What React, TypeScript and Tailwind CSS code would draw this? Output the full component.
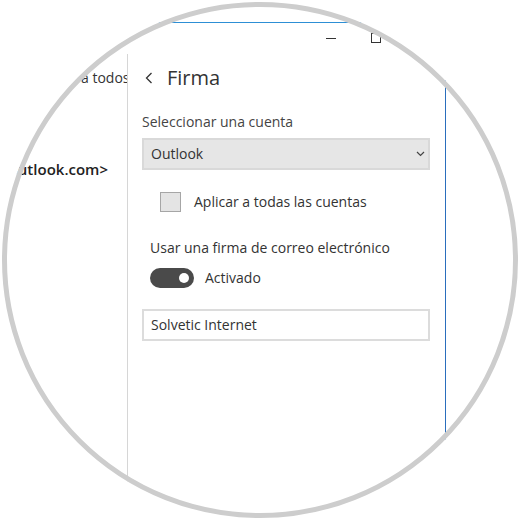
import React from "react";

function Chevron({ className }: { className?: string }) {
  return (
    <svg className={className} width="8" height="12" viewBox="0 0 8 12" fill="none">
      <polyline points="6.5,1 1.5,6 6.5,11" stroke="#333" strokeWidth="1.3" />
    </svg>
  );
}

function ChevronDown() {
  return (
    <svg width="9" height="6" viewBox="0 0 9 6" fill="none">
      <polyline points="1,1 4.5,4.5 8,1" stroke="#444" strokeWidth="1.2" />
    </svg>
  );
}

export default function App() {
  return (
    <div className="relative w-[520px] h-[520px] overflow-hidden bg-white font-['Open_Sans','Noto_Sans',sans-serif] text-[#333]">
      {/* window chrome */}
      <div className="h-[22px]" />
      <div className="h-px bg-[#2d8fd5]" />
      <div className="h-[31px] flex items-start pl-[326px] pt-[10px]">
        <div className="w-[10px] h-px bg-[#333] mt-[5px]" />
        <div className="w-[10px] h-[10px] border border-[#333] ml-[35px]" />
      </div>

      <div className="flex h-[466px]">
        {/* left pane, mostly hidden behind the lens */}
        <div className="w-[128px] border-r border-[#d6d6d6] overflow-hidden text-[14px] leading-[20px]">
          <div className="pt-[14px] pl-[81px] whitespace-nowrap">a todos</div>
          <div className="mt-[71px] flex justify-end pr-[19px] whitespace-nowrap font-semibold text-[15px] text-[#222]">
            @outlook.com&gt;
          </div>
        </div>

        {/* settings pane */}
        <div className="w-[318px] border-r border-[#2a6ebd] pl-[14px] pt-[10px]">
          <div className="flex items-center h-[28px]">
            <Chevron className="ml-[3px]" />
            <span className="ml-[14px] text-[20px] leading-[28px] text-[#333]">Firma</span>
          </div>

          <div className="mt-[20px] text-[14px] leading-[20px] text-[#444]">Seleccionar una cuenta</div>
          <div className="mt-[6px] w-[288px] h-[32px] bg-[#e6e6e6] border-2 border-[#d9d9d9] flex items-center justify-between pl-[7px] pr-[3px]">
            <span className="text-[14px] leading-[20px] text-[#333]">Outlook</span>
            <ChevronDown />
          </div>

          <div className="mt-[22px] ml-[18px] flex items-center h-[20px]">
            <div className="w-[21px] h-[20px] bg-[#e4e4e4] border border-[#a6a6a6]" />
            <span className="ml-[13px] text-[14px] leading-[20px] text-[#333]">Aplicar a todas las cuentas</span>
          </div>

          <div className="mt-[26px] ml-[8px] text-[14px] leading-[20px] text-[#333]">
            Usar una firma de correo electrónico
          </div>
          <div className="mt-[10px] ml-[8px] flex items-center h-[20px]">
            <div className="w-[44px] h-[20px] rounded-full bg-[#4a4a4a] flex items-center justify-end pr-[5px]">
              <div className="w-[10px] h-[10px] rounded-full bg-white" />
            </div>
            <span className="ml-[11px] text-[14px] leading-[20px] text-[#333]">Activado</span>
          </div>

          <div className="mt-[21px] w-[288px] h-[32px] border-2 border-[#dcdcdc] bg-white flex items-center pl-[7px]">
            <span className="text-[14px] leading-[20px] text-[#333]">Solvetic Internet</span>
          </div>
        </div>
        <div className="flex-1" />
      </div>

      {/* circular lens frame over the screenshot */}
      <div className="absolute left-[2px] top-[2px] w-[516px] h-[516px] rounded-full border-[5px] border-[#cdcdcd] shadow-[0_0_0_300px_#ffffff]" />
    </div>
  );
}
